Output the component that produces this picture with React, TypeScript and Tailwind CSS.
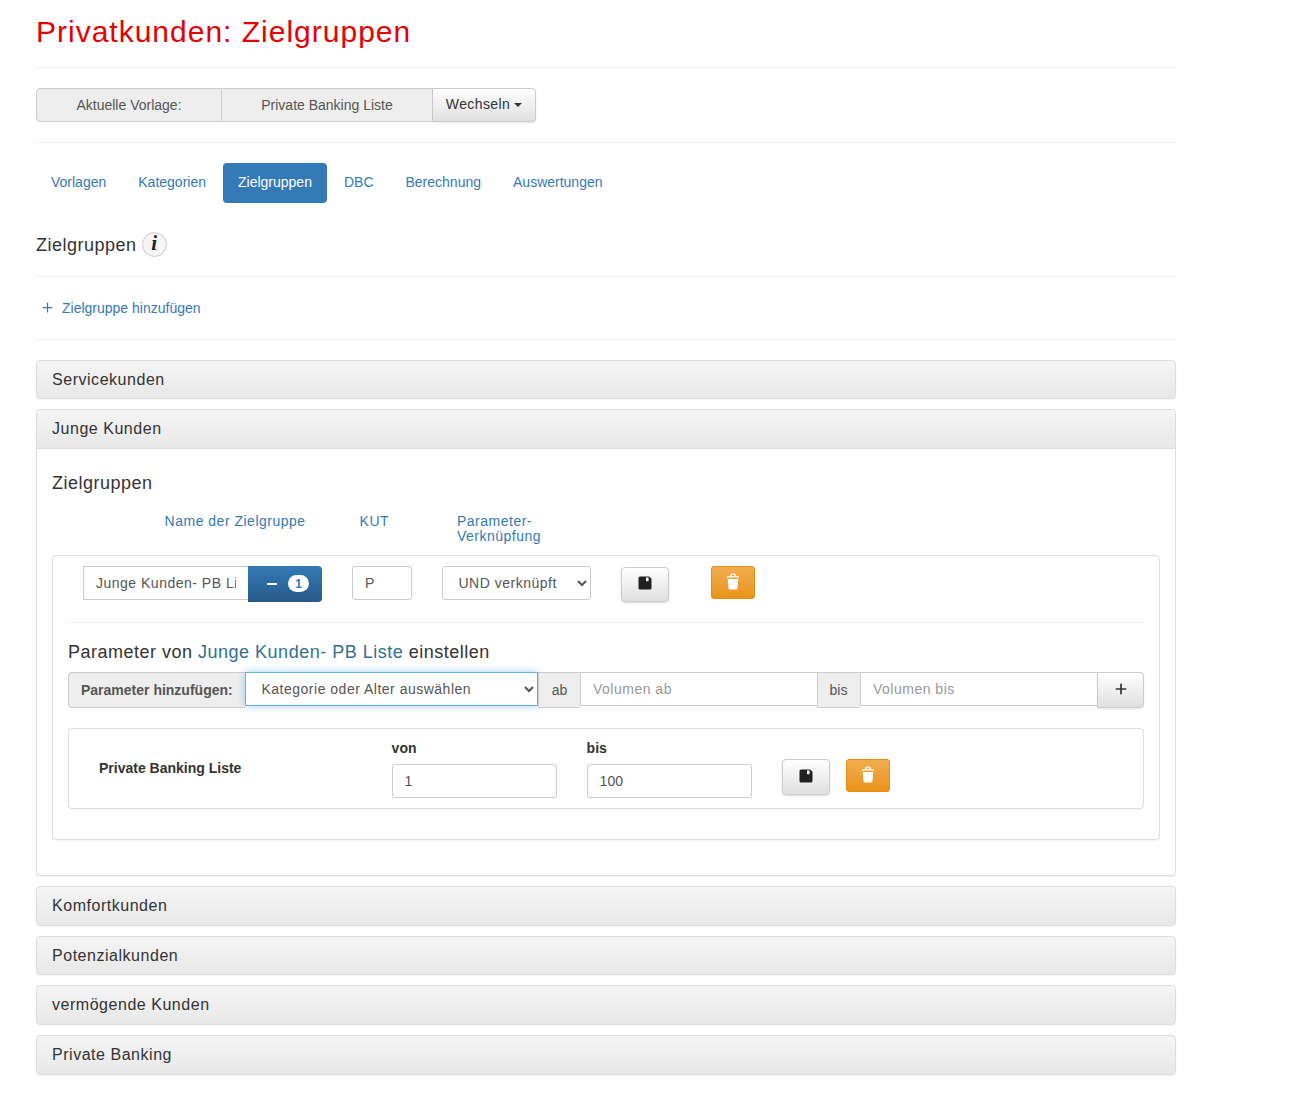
import { Plus } from "lucide-react";

const FONT = "font-['Liberation_Sans',Arial,sans-serif]";

function SaveIcon() {
  return (
    <svg width="14" height="14" viewBox="0 0 14 14" aria-hidden="true">
      <path
        fill="#222"
        fillRule="evenodd"
        d="M2 0.5h9.2L13.5 2.800V12a1.500 1.500 0 0 1-1.500 1.500H2A1.500 1.500 0 0 1 .5 12V2A1.500 1.500 0 0 1 2 .5ZM8 1.600v3.600h2.600V1.600Z"
      />
    </svg>
  );
}

function TrashIcon() {
  return (
    <svg width="14" height="17" viewBox="0 0 14 17" aria-hidden="true">
      <path fill="#fff" d="M1.700 6h10.600l-.9 9.400a1.200 1.200 0 0 1-1.200 1.100H3.800a1.200 1.200 0 0 1-1.200-1.100Z" />
      <path
        fill="none"
        stroke="#fff"
        strokeWidth="1.300"
        d="M1 4.400c1.500-1 10.500-1 12 0M4.600 3.200c0-3 4.800-3 4.800 0"
      />
    </svg>
  );
}

function SaveButton({ className }: { className: string }) {
  return (
    <button className={`flex w-12 items-center justify-center rounded border border-[#ccc] bg-gradient-to-b from-white to-[#e0e0e0] pb-0.5 shadow-[0_1px_2px_rgba(0,0,0,0.15)] ${className}`}>
      <SaveIcon />
    </button>
  );
}

function TrashButton({ className }: { className: string }) {
  return (
    <button className={`flex w-11 items-center justify-center rounded-[3px] border border-[#e38d13] bg-gradient-to-b from-[#f0ad4e] to-[#eb9316] pb-0.5 ${className}`}>
      <TrashIcon />
    </button>
  );
}

function PanelHeading({ title, last }: { title: string; last?: boolean }) {
  return (
    <div className={`flex items-center rounded border border-[#ddd] bg-gradient-to-b from-[#f5f5f5] to-[#e8e8e8] px-[15px] text-[16px] tracking-[0.53px] text-[#333] shadow-[0_1px_2px_rgba(0,0,0,0.05)] ${last ? "h-10" : "mb-2.5 h-[39.5px]"}`}>
      {title}
    </div>
  );
}

function NavItem({ label, active }: { label: string; active?: boolean }) {
  return (
    <a className={`flex h-10 items-center rounded px-[15px] pb-0.5 text-[14px] ${active ? "bg-[#337ab7] text-white" : "text-[#337ab7]"}`}>
      {label}
    </a>
  );
}

export default function App() {
  return (
    <div className={`${FONT} min-h-[1097px] bg-white px-9 text-[14px] text-[#333]`}>
      <div className="w-[1140px]">
        <h1 className="pt-3.5 pb-[18px] text-[30px] leading-[35px] font-normal tracking-[1px] text-[#e60000]">
          Privatkunden: Zielgruppen
        </h1>
        <hr className="border-[#eee]" />

        <div className="my-5 flex h-[34px] w-[500px]">
          <div className="flex w-[186px] items-center justify-center rounded-l border border-[#ccc] bg-[#eee] text-[#555]">
            Aktuelle Vorlage:
          </div>
          <div className="flex w-[211px] items-center justify-center border-y border-r border-[#ccc] bg-[#eee] text-[#555]">
            Private Banking Liste
          </div>
          <button className="flex w-[103px] items-center justify-center gap-1 rounded-r border-y border-r border-[#ccc] bg-gradient-to-b from-white to-[#e0e0e0] pb-0.5 tracking-[0.4px] text-[#333] shadow-[0_1px_2px_rgba(0,0,0,0.1)]">
            Wechseln
            <span className="mt-0.5 border-x-4 border-t-4 border-x-transparent border-t-[#333]" />
          </button>
        </div>
        <hr className="border-[#eee]" />

        <nav className="mt-5 flex gap-0.5">
          <NavItem label="Vorlagen" />
          <NavItem label="Kategorien" />
          <NavItem label="Zielgruppen" active />
          <NavItem label="DBC" />
          <NavItem label="Berechnung" />
          <NavItem label="Auswertungen" />
        </nav>

        <div className="mt-[28px] mb-4 flex h-[29px] items-center gap-[5px]">
          <h2 className="text-[18px] tracking-[0.5px]">Zielgruppen</h2>
          <span className="mb-0.5 flex h-[25px] w-[25px] items-center justify-center rounded-full border border-[#ccc] bg-[#f5f5f5] pb-0.5 font-['Liberation_Serif',serif] text-[21px] font-bold italic text-[#222]">
            i
          </span>
        </div>
        <hr className="border-[#eee]" />

        <a className="flex h-[62px] items-center pl-[4px] text-[#337ab7]">
          <Plus size={15} strokeWidth={2} className="-mt-0.5" />
          <span className="ml-[7px]">Zielgruppe hinzufügen</span>
        </a>
        <hr className="mb-[19.9px] border-[#eee]" />

        <PanelHeading title="Servicekunden" />

        <div className="mb-2.5 rounded border border-[#ddd] shadow-[0_1px_1px_rgba(0,0,0,0.05)]">
          <div className="flex h-[38.5px] items-center rounded-t border-b border-[#ddd] bg-gradient-to-b from-[#f5f5f5] to-[#e8e8e8] px-[15px] text-[16px] tracking-[0.53px]">
            Junge Kunden
          </div>
          <div className="px-[15px] pt-6 pb-[35.5px]">
            <h3 className="text-[18px] leading-5 tracking-[0.5px]">Zielgruppen</h3>
            <div className="mt-[21px] flex text-[14px] leading-[15px] tracking-[0.5px] text-[#337ab7]">
              <span className="ml-[112.6px] w-[195px]">Name der Zielgruppe</span>
              <span className="w-[97.4px]">KUT</span>
              <span className="w-[100px]">Parameter-<br />Verknüpfung</span>
            </div>

            <div className="mt-[11px] rounded border border-[#ddd] px-[15px] pt-2.5 pb-[30px] shadow-[0_1px_1px_rgba(0,0,0,0.05)]">
              <div className="flex items-start pl-[15px]">
                <input
                  readOnly
                  value="Junge Kunden- PB Liste"
                  className="h-[34px] w-[165px] border border-r-0 border-[#ccc] px-3 tracking-[0.5px] text-[#555] outline-none"
                />
                <button className="flex h-9 w-[74px] items-center gap-[11px] rounded-r bg-gradient-to-b from-[#337ab7] to-[#265a88] pl-[19px] text-white">
                  <span className="h-0.5 w-2.5 bg-white" />
                  <span className="flex h-[17px] w-[21px] items-center justify-center rounded-full bg-white text-[12px] font-bold text-[#337ab7]">1</span>
                </button>
                <input
                  readOnly
                  value="P"
                  className="ml-[30px] h-[34px] w-[60px] rounded-[3px] border border-[#ccc] px-3 tracking-[0.5px] text-[#555] outline-none"
                />
                <select className="ml-[30px] h-[34px] w-[149px] rounded-[3px] border border-[#ccc] bg-white pl-[11.5px] tracking-[0.5px] text-[#555] outline-none">
                  <option>UND verknüpft</option>
                </select>
                <SaveButton className="mt-px ml-[30px] h-[35px]" />
                <TrashButton className="ml-[42px] h-[33px]" />
              </div>

              <hr className="mt-5 border-[#eee]" />

              <h4 className="mt-[19.5px] text-[18px] leading-5 tracking-[0.5px]">
                Parameter von <span className="text-[#31708f]">Junge Kunden- PB Liste</span> einstellen
              </h4>

              <div className="mt-[9.5px] flex items-start">
                <div className="flex h-9 w-[177px] items-center rounded-l border border-r-0 border-[#ccc] bg-[#eee] pt-px pl-3 font-bold text-[#555]">
                  Parameter hinzufügen:
                </div>
                <select className="h-[34px] w-[293px] border border-[#66afe9] bg-white pl-[11.5px] tracking-[0.5px] text-[#555] shadow-[0_0_8px_rgba(102,175,233,0.6)] outline-none">
                  <option>Kategorie oder Alter auswählen</option>
                </select>
                <div className="flex h-9 w-[42px] items-center justify-center border border-r-0 border-[#ccc] bg-[#eee] pt-px text-[#555]">ab</div>
                <input
                  placeholder="Volumen ab"
                  className="h-[34px] w-[237px] border-y border-l border-[#ccc] px-3 tracking-[0.5px] outline-none placeholder:text-[#999]"
                />
                <div className="flex h-9 w-[43px] items-center justify-center border border-r-0 border-[#ccc] bg-[#eee] pt-px pr-px text-[#555]">bis</div>
                <input
                  placeholder="Volumen bis"
                  className="h-[34px] w-[237px] border-y border-l border-[#ccc] px-3 tracking-[0.5px] outline-none placeholder:text-[#999]"
                />
                <button className="flex h-9 w-[47px] items-center justify-center rounded-r border border-[#ccc] bg-gradient-to-b from-white to-[#e0e0e0] pb-0.5 text-[#333] shadow-[0_1px_2px_rgba(0,0,0,0.1)]">
                  <Plus size={16} strokeWidth={2.5} />
                </button>
              </div>

              <div className="mt-5 flex h-[81px] rounded border border-[#ddd] shadow-[0_1px_1px_rgba(0,0,0,0.05)]">
                <div className="w-[322.6px] pt-[29px] pl-[30px] font-bold">Private Banking Liste</div>
                <div className="w-[195px] pt-[9px]">
                  <div className="font-bold">von</div>
                  <input readOnly value="1" className="mt-[5px] h-[34px] w-[165px] rounded-[3px] border border-[#ccc] px-3 text-[#555] outline-none" />
                </div>
                <div className="w-[195px] pt-[9px]">
                  <div className="font-bold">bis</div>
                  <input readOnly value="100" className="mt-[5px] h-[34px] w-[165px] rounded-[3px] border border-[#ccc] px-3 text-[#555] outline-none" />
                </div>
                <SaveButton className="mt-[30px] h-9" />
                <TrashButton className="mt-[30px] ml-4 h-[33px]" />
              </div>
            </div>
          </div>
        </div>

        <PanelHeading title="Komfortkunden" />
        <PanelHeading title="Potenzialkunden" />
        <PanelHeading title="vermögende Kunden" />
        <PanelHeading title="Private Banking" last />
      </div>
    </div>
  );
}
